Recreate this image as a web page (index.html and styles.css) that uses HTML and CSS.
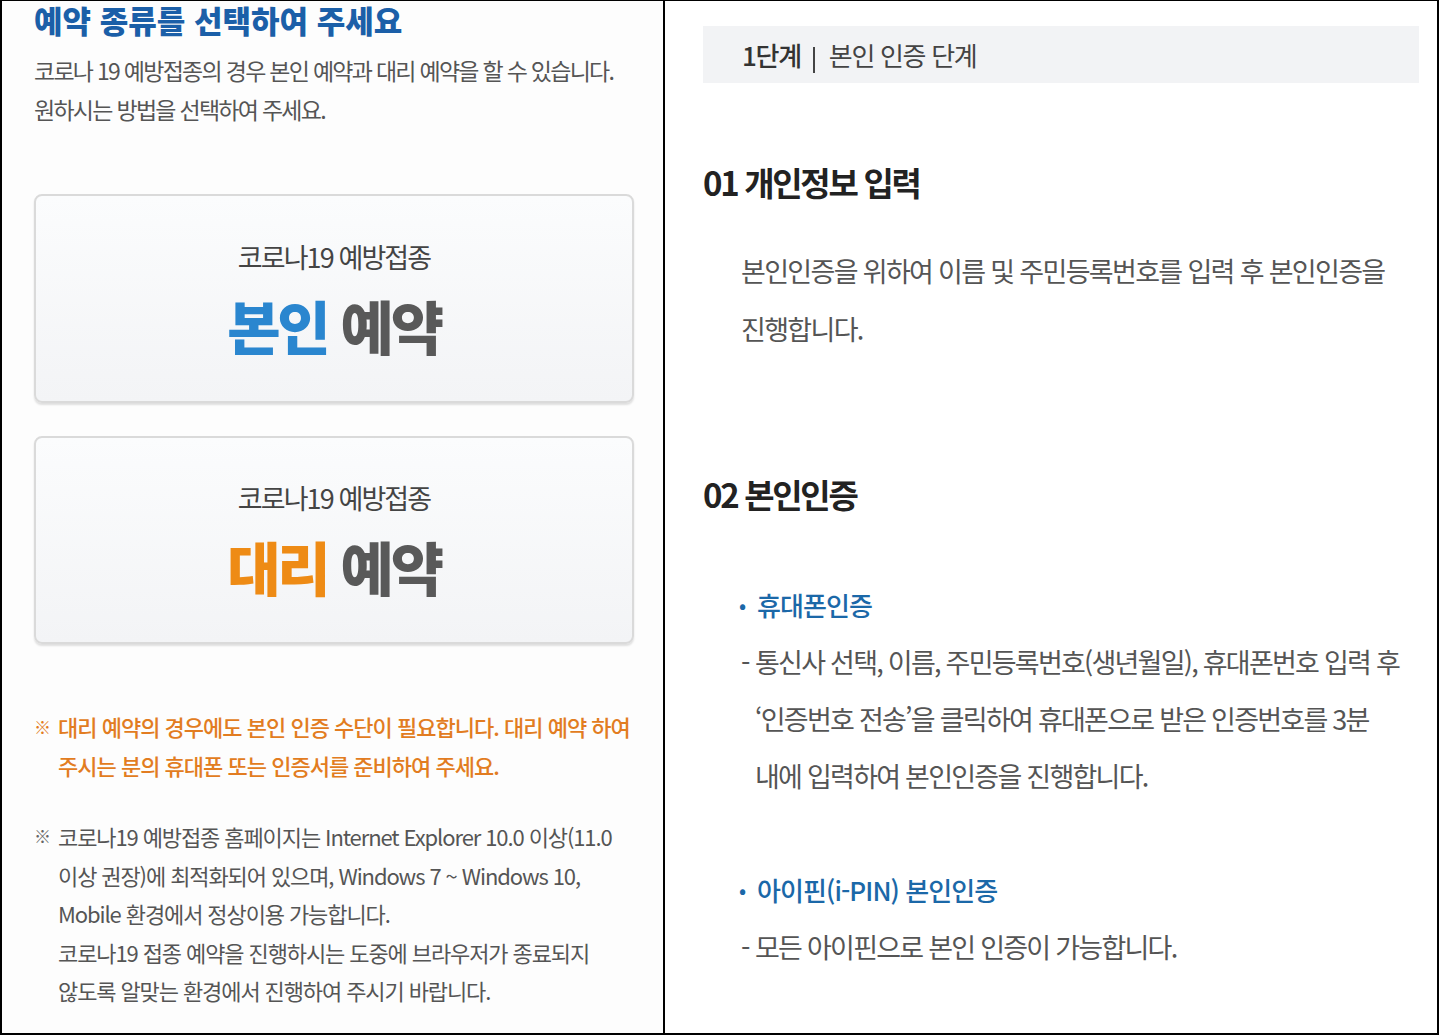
FILE: index.html
```html
<!DOCTYPE html>
<html lang="ko">
<head>
  <meta charset="UTF-8">
  <meta name="viewport" content="width=device-width, initial-scale=1.0">
  <title>코로나19 예방접종 예약</title>
  <link rel="stylesheet" href="styles.css">
</head>
<body>
  <div class="sheet">
    <!-- 왼쪽 : 예약 종류 선택 -->
    <section class="left_box">
      <h2 class="title">예약 종류를 선택하여 주세요</h2>
      <p class="desc">코로나 19 예방접종의 경우 본인 예약과 대리 예약을 할 수 있습니다.<br>원하시는 방법을 선택하여 주세요.</p>

      <a class="card">
        <span class="card_sub">코로나19 예방접종</span>
        <span class="card_big"><em class="blue">본인</em> 예약</span>
      </a>
      <a class="card">
        <span class="card_sub">코로나19 예방접종</span>
        <span class="card_big"><em class="orange">대리</em> 예약</span>
      </a>

      <div class="note note_orange">
        <span class="mark">※</span>
        <p>대리 예약의 경우에도 본인 인증 수단이 필요합니다. 대리 예약 하여<br>주시는 분의 휴대폰 또는 인증서를 준비하여 주세요.</p>
      </div>
      <div class="note note_gray">
        <span class="mark">※</span>
        <p>코로나19 예방접종 홈페이지는 Internet Explorer 10.0 이상(11.0<br>이상 권장)에 최적화되어 있으며, Windows 7 ~ Windows 10,<br>Mobile 환경에서 정상이용 가능합니다.<br>코로나19 접종 예약을 진행하시는 도중에 브라우저가 종료되지<br>않도록 알맞는 환경에서 진행하여 주시기 바랍니다.</p>
      </div>
    </section>

    <div class="divider"></div>

    <!-- 오른쪽 : 1단계 본인 인증 -->
    <section class="right_box">
      <div class="step_bar">
        <strong>1단계</strong><span class="step_line"></span><span>본인 인증 단계</span>
      </div>

      <h3 class="step_title">01 개인정보 입력</h3>
      <p class="step_text">본인인증을 위하여 이름 및 주민등록번호를 입력 후 본인인증을<br>진행합니다.</p>

      <h3 class="step_title second">02 본인인증</h3>

      <div class="cert">
        <div class="cert_head"><span class="dot">•</span>휴대폰인증</div>
        <div class="cert_item"><span class="dash">-</span><p>통신사 선택, 이름, 주민등록번호(생년월일), 휴대폰번호 입력 후<br>‘인증번호 전송’을 클릭하여 휴대폰으로 받은 인증번호를 3분<br>내에 입력하여 본인인증을 진행합니다.</p></div>
      </div>

      <div class="cert">
        <div class="cert_head"><span class="dot">•</span>아이핀(i-PIN) 본인인증</div>
        <div class="cert_item"><span class="dash">-</span><p>모든 아이핀으로 본인 인증이 가능합니다.</p></div>
      </div>
    </section>
  </div>
</body>
</html>
```

FILE: styles.css
```css
* {
  margin: 0;
  padding: 0;
  box-sizing: border-box;
}
body {
  background-color: #fff;
  font-family: 'Noto Sans CJK KR', 'Noto Sans', sans-serif;
  color: #555;
}
em {
  font-style: normal;
}
.sheet {
  display: flex;
  width: 1439px;
  height: 1035px;
  border: 2px solid #000;
  border-top-width: 1px;
}
.divider {
  width: 2px;
  background-color: #000;
}

/* 왼쪽 */
.left_box {
  width: 661px;
  padding: 0 29px 0 32px;
  background-color: #fdfdfd;
}
.title {
  padding-top: 1px;
  font-size: 31px;
  line-height: 36px;
  font-weight: 900;
  color: #1b5fa8;
  letter-spacing: 0;
}
.desc {
  margin-top: 13px;
  font-size: 23px;
  line-height: 39px;
  color: #555;
  letter-spacing: -0.075em;
}
.card {
  display: flex;
  flex-direction: column;
  align-items: center;
  justify-content: center;
  gap: 18px;
  height: 209px;
  margin-top: 65px;
  border: 2px solid #dadada;
  border-radius: 8px;
  background: linear-gradient(#fbfcfd, #f3f4f6);
  box-shadow: 0 2px 2px rgba(0, 0, 0, 0.12);
}
.card + .card {
  margin-top: 33px;
  height: 208px;
}
.card_sub {
  font-size: 27px;
  line-height: 34px;
  color: #444;
  letter-spacing: -0.07em;
}
.card_big {
  font-size: 58px;
  line-height: 66px;
  font-weight: 900;
  color: #595959;
  letter-spacing: -0.055em;
}
.blue {
  color: #2a86cf;
}
.orange {
  color: #ee8b15;
}
.note {
  display: flex;
  font-size: 22px;
  line-height: 39px;
  letter-spacing: -0.045em;
}
.note .mark {
  width: 24px;
  flex: none;
  font-size: 17px;
}
.note_orange {
  margin-top: 63px;
  color: #e27c21;
  font-weight: 500;
}
.note_gray {
  margin-top: 32px;
  line-height: 38.5px;
  color: #555;
  letter-spacing: -0.05em;
}
.note_gray .mark {
  color: #666;
}

/* 오른쪽 */
.right_box {
  flex: 1;
  padding: 25px 18px 0 38px;
  background-color: #fff;
}
.step_bar {
  display: flex;
  align-items: center;
  height: 57px;
  padding-left: 39px;
  background-color: #f2f3f5;
  font-size: 26px;
  color: #444;
  letter-spacing: -0.05em;
}
.step_bar strong {
  font-weight: 500;
  color: #333;
}
.step_line {
  display: inline-block;
  width: 2px;
  height: 26px;
  margin: 10px 14px 0 12px;
  background-color: #444;
}
.step_title {
  margin-top: 77px;
  font-size: 33px;
  line-height: 44px;
  font-weight: 700;
  color: #222;
  letter-spacing: -0.07em;
}
.step_title.second {
  margin-top: 114px;
}
.step_text {
  margin-top: 38px;
  padding-left: 38px;
  font-size: 27px;
  line-height: 58px;
  color: #555;
  letter-spacing: -0.062em;
}
.cert {
  margin-top: 60px;
  padding-left: 36px;
  font-size: 27px;
  line-height: 57px;
  letter-spacing: -0.065em;
}
.cert + .cert {
  margin-top: 57px;
}
.cert_head {
  display: flex;
  font-size: 26px;
  font-weight: 500;
  color: #1b68a8;
  letter-spacing: -0.035em;
}
.dot {
  width: 18px;
  flex: none;
  font-size: 20px;
}
.cert_item {
  display: flex;
  color: #555;
}
.dash {
  width: 16px;
  flex: none;
  padding-left: 2px;
}
```
